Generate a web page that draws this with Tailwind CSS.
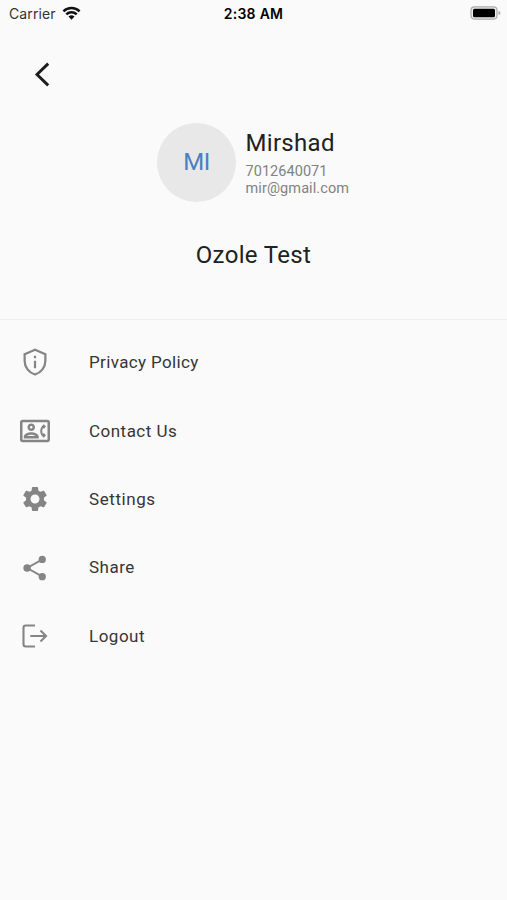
<!DOCTYPE html>
<html lang="en">
<head>
<meta charset="utf-8">
<title>Profile</title>
<script src="https://cdn.jsdelivr.net/npm/@tailwindcss/browser@4"></script>
</head>
<body class="w-[507px] h-[900px] overflow-hidden bg-[#fafafa] font-['Roboto',sans-serif] text-[#212121]">
<header class="grid grid-cols-3 items-center h-[26px] pl-[9px] pr-[6px] font-['Inter',sans-serif] text-[14px]">
  <div class="flex items-center gap-[6px]">
    <span class="text-[#333] tracking-[0.12px]">Carrier</span>
    <svg class="w-[19px] h-[14px]" viewBox="0 0 18 14" fill="none" stroke="#111" stroke-width="2.5"><path d="M.9 5.3a11.5 11.5 0 0 1 16.2 0M3.8 8.3a7.4 7.4 0 0 1 10.4 0"/><path d="M9 13.7 6 10.6a4.3 4.3 0 0 1 6 0z" fill="#111" stroke="none"/></svg>
  </div>
  <span class="text-center font-semibold text-black whitespace-nowrap tracking-[0.28px] pr-[3px]">2:38 AM</span>
  <svg class="justify-self-end w-[31px] h-[14px]" viewBox="0 0 31 14"><rect x="1" y=".9" width="26" height="12.2" rx="3.5" fill="#eee" stroke="#aaa" stroke-width="1.2"/><rect x="3" y="2.7" width="22" height="8.6" rx="1.5" fill="#000"/><path d="M28.5 5v4q2-.6 2-2t-2-2z" fill="#aaa"/></svg>
</header>
<nav class="h-[97px] pl-[34px] pt-[36px]">
  <svg class="w-[16px] h-[25px]" viewBox="0 0 16 25" fill="none" stroke="#1c1c1c" stroke-width="2.9"><path d="M14.2 1.6 3 12.5l11.2 10.9"/></svg>
</nav>
<section class="h-[197px] border-b border-[#eeeeee]">
  <div class="flex pl-[157px] gap-[9.5px]">
    <div class="w-[79px] h-[79px] rounded-full bg-[#e8e8e8] text-[#4a80c0] text-[24px] leading-[79px] text-center tracking-[-0.4px]">MI</div>
    <div class="flex flex-col pt-[5px] whitespace-nowrap">
      <div class="text-[24px] leading-[30px] tracking-[0.3px]">Mirshad</div>
      <div class="text-[14.5px] leading-[17px] pt-[5px] text-[#828282] tracking-[0.05px]">7012640071</div>
      <div class="text-[14.5px] leading-[17px] text-[#828282] tracking-[0.1px]">mir@gmail.com</div>
    </div>
  </div>
  <h1 class="mt-[38px] text-[24px] leading-[30px] text-center tracking-[0.35px]">Ozole Test</h1>
</section>
<ul class="pt-[8.3px] pl-5 text-[17px] text-[#363636]">
  <li class="flex items-center h-[68.4px] gap-[39px]">
    <svg class="w-[30px] h-[30px]" viewBox="0 0 24 24" fill="none" stroke="#858585" stroke-width="1.8"><path d="M12 2.2 3.7 5.8V11c0 5.1 3.4 9.5 8.3 11 4.9-1.5 8.3-5.9 8.3-11V5.8z"/><path d="M12 11v6M12 7v2"/></svg>
    <span class="tracking-[0.36px] pt-px">Privacy Policy</span>
  </li>
  <li class="flex items-center h-[68.4px] gap-[39px]">
    <svg class="w-[30px] h-[30px]" viewBox="0 0 24 24" fill="#858585"><path d="M22 3H2C.9 3 0 3.9 0 5v14c0 1.1.9 2 2 2h20c1.1 0 1.99-.9 1.99-2L24 5c0-1.1-.9-2-2-2zm0 16H2V5h20v14z"/><path d="M19.1 6.6c-3.9 2.8-3.9 8 0 10.8l1.6-1.8-1.2-1.6h-1.3c-.5-1.3-.5-2.7 0-4h1.3l1.2-1.6z"/><path d="M9 12c1.65 0 3-1.35 3-3s-1.35-3-3-3-3 1.35-3 3 1.35 3 3 3zm0-4c.55 0 1 .45 1 1s-.45 1-1 1-1-.45-1-1 .45-1 1-1zm6 8.59c0-2.5-3.97-3.58-6-3.58s-6 1.08-6 3.58V18h12v-1.41zM5.48 16c.74-.5 2.22-1 3.52-1s2.77.49 3.52 1H5.48z"/></svg>
    <span class="tracking-[0.48px] pt-px">Contact Us</span>
  </li>
  <li class="flex items-center h-[68.4px] gap-[39px]">
    <svg class="w-[30px] h-[30px]" viewBox="0 0 24 24" fill="#858585"><path d="M19.14 12.94c.04-.3.06-.61.06-.94 0-.32-.02-.64-.07-.94l2.03-1.58c.18-.14.23-.41.12-.61l-1.92-3.32c-.12-.22-.37-.29-.59-.22l-2.39.96c-.5-.38-1.03-.7-1.62-.94l-.36-2.54c-.04-.24-.24-.41-.48-.41h-3.84c-.24 0-.43.17-.47.41l-.36 2.54c-.59.24-1.13.57-1.62.94l-2.39-.96c-.22-.08-.47 0-.59.22L2.74 8.87c-.12.21-.08.47.12.61l2.03 1.58c-.05.3-.09.63-.09.94s.02.64.07.94l-2.03 1.58c-.18.14-.23.41-.12.61l1.92 3.32c.12.22.37.29.59.22l2.39-.96c.5.38 1.03.7 1.62.94l.36 2.54c.05.24.24.41.48.41h3.84c.24 0 .44-.17.47-.41l.36-2.54c.59-.24 1.13-.56 1.62-.94l2.39.96c.22.08.47 0 .59-.22l1.92-3.32c.12-.22.07-.47-.12-.61l-2.01-1.58zM12 15.6c-1.98 0-3.6-1.62-3.6-3.6s1.62-3.6 3.6-3.6 3.6 1.62 3.6 3.6-1.62 3.6-3.6 3.6z"/></svg>
    <span class="tracking-[0.58px]">Settings</span>
  </li>
  <li class="flex items-center h-[68.4px] gap-[39px]">
    <svg class="w-[30px] h-[30px]" viewBox="0 0 24 24" fill="#858585"><path d="M5.6 12 18 5.1M5.6 12 18 18.9" stroke="#858585" stroke-width="1.6"/><circle cx="5.7" cy="12" r="3"/><circle cx="17.8" cy="5.1" r="2.9"/><circle cx="17.8" cy="18.9" r="2.9"/></svg>
    <span class="tracking-[0.5px]">Share</span>
  </li>
  <li class="flex items-center h-[68.4px] gap-[39px]">
    <svg class="w-[30px] h-[30px]" viewBox="0 0 30 30" fill="none" stroke="#858585" stroke-width="2.1"><path d="M15 4.5H5.7A2.2 2.2 0 0 0 3.5 6.7v16.6a2.2 2.2 0 0 0 2.2 2.2H15M10.3 15H26M20.5 9.5 26 15l-5.5 5.5"/></svg>
    <span class="tracking-[0.5px] pt-px">Logout</span>
  </li>
</ul>
</body>
</html>
